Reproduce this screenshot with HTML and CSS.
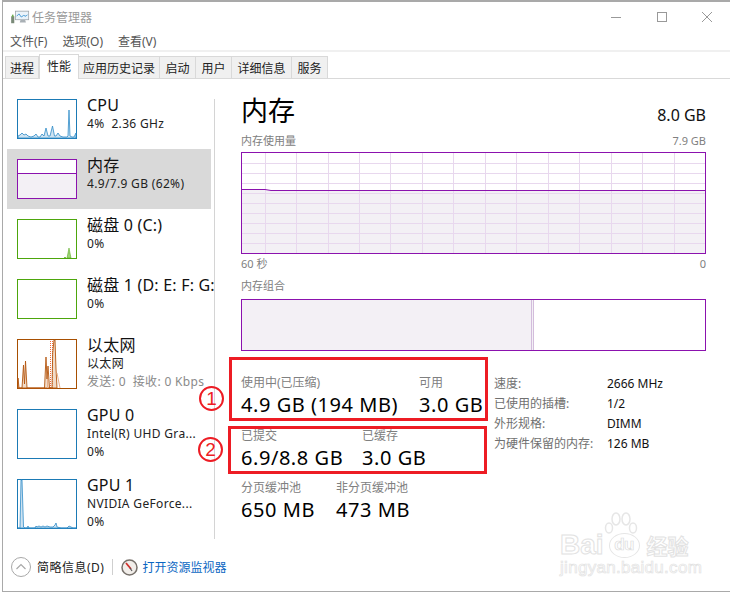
FILE: index.html
```html
<!DOCTYPE html>
<html lang="zh-CN">
<head>
<meta charset="utf-8">
<title>任务管理器</title>
<link rel="stylesheet" href="styles.css">
</head>
<body>
<div class="window">
  <header class="titlebar">
    <svg class="app-icon" width="19" height="14" viewBox="0 0 24 18">
      <rect x="0" y="8" width="4" height="9" fill="#7a8a78"/>
      <rect x="1" y="6" width="2" height="3" fill="#6fae4f"/>
      <rect x="5.500" y="1.500" width="17" height="11" fill="#eaf3fa" stroke="#9aa2a8"/>
      <path d="M7 8l3-3 3 4 3-2 3 1 2-2" fill="none" stroke="#3f97d3" stroke-width="1.200"/>
      <path d="M12 13h6l1 3H11z" fill="#a9b0b5"/>
    </svg>
    <span class="app-title">任务管理器</span>
    <div class="controls">
      <svg width="10" height="10" viewBox="0 0 10 10"><path d="M0 5.500h10" stroke="#999" fill="none"/></svg>
      <svg width="10" height="10" viewBox="0 0 10 10"><rect x=".5" y=".5" width="9" height="9" fill="none" stroke="#999"/></svg>
      <svg width="10" height="10" viewBox="0 0 10 10"><path d="M0 0l10 10M10 0L0 10" stroke="#999" fill="none"/></svg>
    </div>
  </header>
  <nav class="menubar">
    <span>文件(F)</span><span>选项(O)</span><span>查看(V)</span>
  </nav>
  <div class="tabs">
    <span class="tab tab-a">进程</span>
    <span class="tab tab-active">性能</span>
    <span class="tab tab-b">应用历史记录</span>
    <span class="tab tab-c">启动</span>
    <span class="tab tab-c">用户</span>
    <span class="tab tab-d">详细信息</span>
    <span class="tab tab-c">服务</span>
  </div>

  <main class="content">
    <aside class="sidebar">
      <div class="item">
        <svg class="thumb" viewBox="0 0 60 40"><rect x=".5" y=".5" width="59" height="39" fill="#fff" stroke="#1b7ab5"/>
          <path d="M1 39V37L3 36 5 34 7 36 9 35 11 37 14 38 17 37 19 35 21 38 23 38 25 35 27 37 29 29 31 37 33 37 35.500 27 37.500 37 39 37 41 34 43 37 46 38 50 38 51 37 52 11 53 37 55 38 57 38 59 34V39Z" fill="#cfe3f1" stroke="#2f8cc8" stroke-width=".8"/></svg>
        <div class="info"><div class="name">CPU</div><div class="sub">4%&nbsp; 2.36 GHz</div></div>
      </div>
      <div class="item item-active">
        <svg class="thumb" viewBox="0 0 60 40"><rect x=".5" y=".5" width="59" height="39" fill="#fff" stroke="#8b12ae"/>
          <rect x="1" y="15" width="58" height="24" fill="#f3f0f5"/><path d="M1 14.500h58" stroke="#8b12ae"/></svg>
        <div class="info"><div class="name">内存</div><div class="sub">4.9/7.9 GB (62%)</div></div>
      </div>
      <div class="item">
        <svg class="thumb" viewBox="0 0 60 40"><rect x=".5" y=".5" width="59" height="39" fill="#fff" stroke="#4da60c"/>
          <path d="M47 39l1-1 1 1zM50 39l2-10 2 10z" fill="#9fd27a" stroke="#4da60c" stroke-width=".5"/></svg>
        <div class="info"><div class="name">磁盘 0 (C:)</div><div class="sub">0%</div></div>
      </div>
      <div class="item">
        <svg class="thumb" viewBox="0 0 60 40"><rect x=".5" y=".5" width="59" height="39" fill="#fff" stroke="#4da60c"/></svg>
        <div class="info"><div class="name clip">磁盘 1 (D: E: F: G:</div><div class="sub">0%</div></div>
      </div>
      <div class="item item-tall">
        <svg class="thumb thumb-tall" viewBox="0 0 60 50"><rect x=".5" y=".5" width="59" height="49" fill="#fff" stroke="#a74f01"/>
          <path d="M33.500 49V1M35.500 49V1" stroke="#ef6a38" stroke-dasharray="1 1" fill="none"/>
          <path d="M1 49V39L2 49H5L6.500 26 7.500 45 8.500 22 10 49H27.500L29 18 30 40 31 27 32.500 49H35L35.700 14 37 1H38L39 30 40 49Z" fill="#e6bf9d" fill-opacity=".55" stroke="#b4560f" stroke-width=".9"/>
          <path d="M43 49L40 34M30.500 49V40" stroke="#e9b08b" fill="none"/></svg>
        <div class="info"><div class="name">以太网</div><div class="sub">以太网</div><div class="sub muted">发送: 0&nbsp; 接收: 0 Kbps</div></div>
      </div>
      <div class="item item-tall">
        <svg class="thumb thumb-tall" viewBox="0 0 60 50"><rect x=".5" y=".5" width="59" height="49" fill="#fff" stroke="#1b7ab5"/></svg>
        <div class="info"><div class="name">GPU 0</div><div class="sub">Intel(R) UHD Gra...</div><div class="sub">0%</div></div>
      </div>
      <div class="item item-tall">
        <svg class="thumb thumb-tall" viewBox="0 0 60 50"><rect x=".5" y=".5" width="59" height="49" fill="#fff" stroke="#1b7ab5"/>
          <path d="M1 49H3L4 1H5L6.500 48 8 49H10L11 47 12 49H18L19 47 20 48 22 47 24 48 26 47 28 48 30 47 33 48 36 48 38 46 39 44 40 48 44 49H50L52 47 54 48 56 49H59V49Z" fill="#cfe3f1" stroke="#2f8cc8" stroke-width=".8"/></svg>
        <div class="info"><div class="name">GPU 1</div><div class="sub">NVIDIA GeForce...</div><div class="sub">0%</div></div>
      </div>
    </aside>

    <section class="detail">
      <div class="head"><h1>内存</h1><span class="capacity">8.0 GB</span></div>
      <div class="chart-label chart-title"><span>内存使用量</span><span>7.9 GB</span></div>
      <svg class="chart" viewBox="0 0 465 102" preserveAspectRatio="none">
        <rect width="465" height="38" fill="#fff"/>
        <rect y="38" width="465" height="64" fill="#f3f0f5"/>
        <path d="M0 11.500H465M0 21.500H465M0 31.500H465M0 41.500H465M0 51.500H465M0 61.500H465M0 71.500H465M0 81.500H465M0 91.500H465M24.500 0V102M55.500 0V102M87.500 0V102M118.500 0V102M149.500 0V102M181.500 0V102M212.500 0V102M244.500 0V102M275.500 0V102M307.500 0V102M338.500 0V102M370.500 0V102M401.500 0V102M433.500 0V102" stroke="#e8d8ee" fill="none"/>
        <path d="M0 37.500H24L30 38.500H465" stroke="#8b12ae" fill="none"/>
        <rect x=".5" y=".5" width="464" height="101" fill="none" stroke="#8b12ae"/>
      </svg>
      <div class="chart-label axis"><span>60 秒</span><span>0</span></div>
      <div class="chart-label compose"><span>内存组合</span></div>
      <div class="bar"><div class="bar-used"></div><div class="bar-mod"></div></div>

      <div class="stats">
        <div class="stats-left">
          <div class="row row-1">
            <div class="stat stat-used"><div class="label">使用中(已压缩)</div><div class="value">4.9 GB (194 MB)</div></div>
            <div class="stat"><div class="label">可用</div><div class="value">3.0 GB</div></div>
          </div>
          <div class="row row-2">
            <div class="stat stat-commit"><div class="label">已提交</div><div class="value">6.9/8.8 GB</div></div>
            <div class="stat"><div class="label">已缓存</div><div class="value">3.0 GB</div></div>
          </div>
          <div class="row row-3">
            <div class="stat stat-paged"><div class="label">分页缓冲池</div><div class="value">650 MB</div></div>
            <div class="stat"><div class="label">非分页缓冲池</div><div class="value">473 MB</div></div>
          </div>
        </div>
        <dl class="specs">
          <dt>速度:</dt><dd>2666 MHz</dd>
          <dt>已使用的插槽:</dt><dd>1/2</dd>
          <dt>外形规格:</dt><dd>DIMM</dd>
          <dt>为硬件保留的内存:</dt><dd>126 MB</dd>
        </dl>
      </div>
    </section>
  </main>

  <footer class="footer">
    <svg class="chev" width="20" height="20" viewBox="0 0 20 20"><circle cx="10" cy="10" r="9.500" fill="none" stroke="#a8a8a8"/><path d="M5.500 12L10 7.500l4.500 4.500" fill="none" stroke="#a8a8a8" stroke-width="1.200"/></svg>
    <span class="less">简略信息(D)</span>
    <span class="sep"></span>
    <svg class="monitor" width="17" height="17" viewBox="0 0 17 17"><circle cx="8.500" cy="8.500" r="7.500" fill="#f2eeea" stroke="#77716b" stroke-width="1.500"/><path d="M5 4l5 6" stroke="#d0312d" stroke-width="1.800"/><path d="M9 9l2 3" stroke="#555" stroke-width="1.200"/></svg>
    <span class="link">打开资源监视器</span>
  </footer>
</div>

<div class="mark mark-1"></div>
<div class="mark mark-2"></div>
<div class="num num-1">1</div>
<div class="num num-2">2</div>

<div class="watermark">
  <svg class="paw" width="34" height="22" viewBox="0 0 34 22"><g fill="#fff" stroke="#e6e6e6" stroke-width="1.500"><ellipse cx="5" cy="16" rx="3.500" ry="5"/><ellipse cx="12" cy="7" rx="4" ry="6"/><ellipse cx="22" cy="7" rx="4" ry="6"/><ellipse cx="29" cy="16" rx="3.500" ry="5"/></g></svg>
  <div class="wm-logo"><span>Bai</span><span class="wm-du">du</span><span class="wm-cn">经验</span></div>
  <div class="wm-url">jingyan.baidu.com</div>
</div>
</body>
</html>
```

FILE: styles.css
```css
* { box-sizing: border-box; }
html, body { margin: 0; padding: 0; }
body {
  width: 730px;
  height: 592px;
  background: #fff;
  overflow: hidden;
  position: relative;
  font-family: "Noto Sans", "Noto Sans CJK SC", sans-serif;
  color: #111;
}
.window {
  width: 728px;
  height: 592px;
  margin-left: 2px;
  border-top: 2px solid #a9a9a9;
  border-left: 1px solid #a9a9a9;
  border-bottom: 1px solid #a9a9a9;
  display: flex;
  flex-direction: column;
}
.titlebar {
  height: 28px;
  display: flex;
  align-items: center;
  padding: 0 18px 0 8px;
  flex: none;
}
.app-icon { margin-right: 2px; margin-top: 2px; }
.app-title { font-size: 12px; color: #9a9a9a; margin-top: 1px; }
.controls {
  margin-left: auto;
  display: flex;
  gap: 35.500px;
  margin-top: 1px;
}
.controls svg { display: block; }
.menubar {
  height: 20px;
  flex: none;
  display: flex;
  align-items: center;
  gap: 15px;
  padding: 2px 0 0 7px;
  font-size: 12px;
  color: #555;
}
.tabs {
  flex: none;
  height: 29px;
  border-top: 2px solid #f0f0f0;
  border-bottom: 1px solid #d9d9d9;
  display: flex;
  align-items: flex-end;
  padding-left: 2px;
  position: relative;
}
.tab {
  height: 22px;
  background: #f0f0f0;
  border: 1px solid #d9d9d9;
  border-bottom: 0;
  border-left: 0;
  font-size: 12px;
  display: flex;
  align-items: center;
  justify-content: center;
  color: #222;
}
.tab-a { width: 34px; border-left: 1px solid #d9d9d9; }
.tab-active {
  width: 40px;
  height: 25px;
  background: #fff;
  border: 1px solid #d9d9d9;
  border-bottom: 0;
  margin-bottom: -1px;
  padding-bottom: 3px;
}
.tab-b { width: 81px; }
.tab-c { width: 36px; }
.tab-d { width: 60px; }
.content {
  flex: 1;
  display: flex;
  min-height: 0;
}
.sidebar {
  width: 208px;
  flex: none;
  margin-left: 4px;
  margin-top: 10px;
  height: 450px;
  position: relative;
  display: flex;
  flex-direction: column;
}
.sidebar::after {
  content: "";
  position: absolute;
  right: 0;
  top: 10px;
  bottom: 0;
  width: 1px;
  background: #d4d4d4;
}
.item {
  height: 60px;
  width: 204px;
  display: flex;
  padding: 10px 0 0 10px;
}
.item-tall { height: 70px; }
.item-active { background: #d9d9d9; }
.thumb { width: 60px; height: 40px; flex: none; display: block; }
.thumb-tall { height: 50px; }
.info {
  margin-left: 10px;
  margin-top: -4px;
  min-width: 0;
  white-space: nowrap;
}
.name { font-size: 16px; letter-spacing: .2px; line-height: 20px; color: #111; }
.clip { width: 127px; overflow: hidden; }
.sub { font-size: 12px; line-height: 18px; letter-spacing: .33px; color: #222; }
.muted { color: #8a8a8a; }
.detail {
  flex: none;
  margin-left: 26px;
  width: 465px;
}
.head {
  display: flex;
  justify-content: space-between;
  align-items: flex-end;
  margin-top: 13px;
  height: 37px;
}
h1 { margin: 0; font-weight: 400; font-size: 27px; line-height: 37px; color: #000; }
.capacity { font-size: 16px; line-height: 22px; margin-bottom: 3px; }
.chart-label {
  display: flex;
  justify-content: space-between;
  font-size: 11px;
  line-height: 16px;
  color: #808080;
  margin-top: 2px;
}
.chart-title { margin: 4px 0 3px; }
.chart { display: block; width: 465px; height: 102px; }
.axis { margin-top: 2px; }
.compose { margin-top: 6px; }
.bar {
  margin-top: 5px;
  height: 52px;
  border: 1px solid #8b12ae;
  display: flex;
}
.bar-used { width: 289px; background: #f3f0f5; }
.bar-mod { width: 3px; background: #f3f0f5; border-left: 1px solid #d3bcdc; border-right: 1px solid #d3bcdc; }
.stats { display: flex; }
.stats-left { width: 253px; flex: none; }
.row { display: flex; }
.row-1 { margin-top: 24px; }
.row-2 { margin-top: 10px; }
.row-3 { margin-top: 9px; }
.label { font-size: 12px; line-height: 16px; color: #808080; white-space: nowrap; }
.value { font-size: 20px; letter-spacing: .55px; line-height: 27px; color: #000; white-space: nowrap; }
.stat-used { width: 178px; }
.stat-commit { width: 121px; }
.stat-paged { width: 95px; }
.specs {
  margin: 22px 0 0;
  display: grid;
  grid-template-columns: 113px auto;
  grid-auto-rows: 20px;
  align-items: center;
  font-size: 12px;
}
.specs dt { color: #707070; white-space: nowrap; }
.specs dd { margin: 0; color: #111; }
.footer {
  position: relative;
  flex: none;
  height: 50px;
  display: flex;
  align-items: center;
  padding-left: 8px;
  padding-top: 2px;
}
.less { font-size: 12px; letter-spacing: .5px; margin-left: 6px; color: #222; }
.sep { width: 1px; height: 16px; background: #cfcfcf; margin-left: 8px; }
.monitor { margin-left: 8px; }
.link { font-size: 12px; color: #0a66c2; margin-left: 4px; }
.mark {
  position: absolute;
  border: 3px solid #ed1c24;
}
.mark-1 { left: 229px; top: 357px; width: 259px; height: 64px; }
.mark-2 { left: 228px; top: 426px; width: 259px; height: 48px; }
.num {
  position: absolute;
  width: 25px;
  height: 25px;
  border: 2px solid #ed1c24;
  border-radius: 50%;
  color: #ed1c24;
  font-size: 19px;
  line-height: 21px;
  text-align: center;
  font-family: "Liberation Sans", sans-serif;
  font-weight: 400;
}
.num-1 { left: 199px; top: 386px; }
.num-2 { left: 198px; top: 437px; }
.watermark {
  position: absolute;
  left: 560px;
  top: 512px;
  width: 132px;
  height: 64px;
  color: #fff;
}
.paw { position: absolute; left: 44px; top: 0; }
.wm-logo {
  position: absolute;
  left: 0;
  top: 18px;
  display: flex;
  align-items: center;
  font-family: "Liberation Sans", sans-serif;
  font-size: 28px;
  font-weight: 700;
  line-height: 30px;
  color: #fff;
  -webkit-text-stroke: 1px #e2e2e2;
}
.wm-du {
  width: 31px;
  height: 25px;
  margin: 1px 7px 0 5px;
  border: 1.500px solid #e6e6e6;
  border-radius: 50%;
  font-size: 17px;
  letter-spacing: -.5px;
  line-height: 21px;
  text-align: center;
  -webkit-text-stroke: .7px #dcdcdc;
}
.wm-cn { font-family: "Noto Sans CJK SC", sans-serif; font-size: 21px; font-weight: 700; }
.wm-url {
  position: absolute;
  left: 0;
  top: 46px;
  font-family: "Liberation Sans", sans-serif;
  font-size: 17px;
  line-height: 20px;
  letter-spacing: .3px;
  white-space: nowrap;
  color: #fff;
  -webkit-text-stroke: .7px #e2e2e2;
}
```
